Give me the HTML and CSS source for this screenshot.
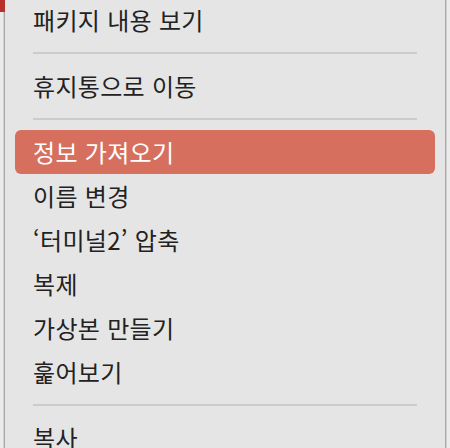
FILE: index.html
```html
<!DOCTYPE html>
<html lang="ko">
<head>
<meta charset="utf-8">
<link rel="stylesheet" href="styles.css">
</head>
<body>
<div class="corner"></div>
<ul class="menu">
  <li class="item">패키지 내용 보기</li>
  <li class="sep"></li>
  <li class="item">휴지통으로 이동</li>
  <li class="sep"></li>
  <li class="item active">정보 가져오기</li>
  <li class="item">이름 변경</li>
  <li class="item">‘터미널2’ 압축</li>
  <li class="item">복제</li>
  <li class="item">가상본 만들기</li>
  <li class="item">훑어보기</li>
  <li class="sep"></li>
  <li class="item">복사</li>
</ul>
</body>
</html>
```
FILE: styles.css
```css
html, body {
  margin: 0;
  padding: 0;
  height: 100%;
  overflow: hidden;
}
body {
  background: #ebebeb;
  font-family: "Noto Sans CJK KR", "Noto Sans", sans-serif;
  position: relative;
}
.corner {
  position: absolute;
  left: 0;
  top: 0;
  width: 5px;
  height: 12px;
  background: #b8302a;
}
.menu {
  list-style: none;
  margin: -2px 0 0 4px;
  padding: 0 0 40px 0;
  width: 440px;
  background: #e5e5e5;
  border-left: 1px solid #a9a9a9;
  border-right: 1px solid #a9a9a9;
  box-shadow: 1px 0 0 #d0d0d0, -1px 0 0 #d0d0d0;
}
.item {
  height: 44px;
  margin: 0 10px;
  padding: 0 18px;
  border-radius: 6px;
  display: flex;
  align-items: center;
  font-size: 24px;
  letter-spacing: 0.3px;
  color: #222222;
  line-height: 1;
}
.item.active {
  background: #d76f5f;
  color: #ffffff;
}
.sep {
  height: 22px;
  display: flex;
  align-items: center;
  padding: 0 28px;
}
.sep::before {
  content: "";
  display: block;
  width: 100%;
  height: 2px;
  background: #cccccc;
}
```
